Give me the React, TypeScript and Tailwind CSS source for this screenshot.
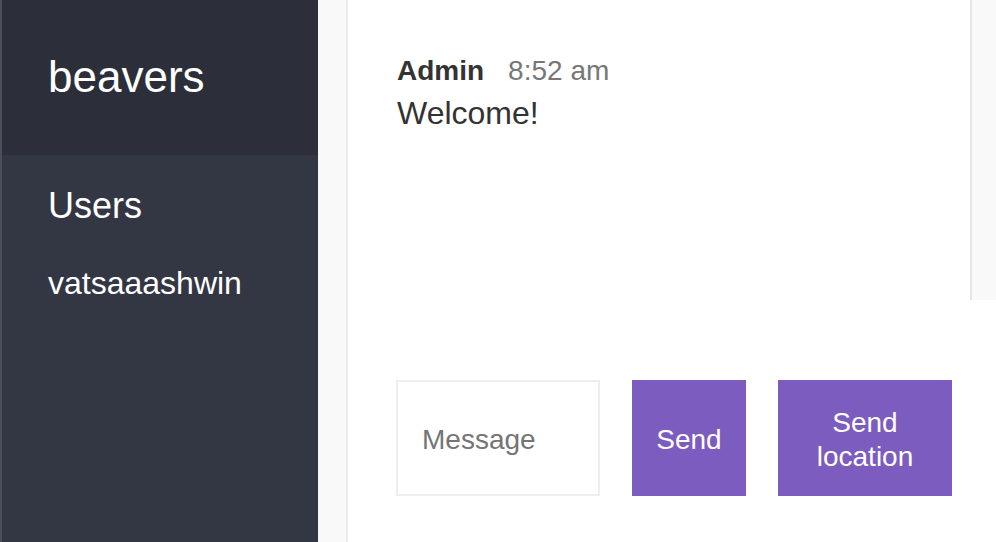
const users = ['vatsaaashwin'];

const messages = [{ name: 'Admin', time: '8:52 am', text: 'Welcome!' }];

const App = () => {
  return (
    <div className="flex h-screen w-full overflow-hidden bg-white font-['Liberation_Sans',Arial,sans-serif]">
      <aside className="flex w-[318px] shrink-0 flex-col border-l-2 border-[#4b4e5b] bg-[#333744] text-white">
        <h2 className="h-[155px] shrink-0 bg-[#2c2f3a] pl-[46px] pt-[52px] text-[44px] leading-[50px]">beavers</h2>
        <h3 className="mt-[30px] pl-[46px] text-[36px] leading-[41px]">Users</h3>
        <ul className="mt-[39px] pl-[46px] text-[32px] leading-[37px]">
          {users.map((u) => (
            <li key={u}>{u}</li>
          ))}
        </ul>
      </aside>
      <div className="w-[30px] shrink-0 border-r-2 border-[#ebebeb] bg-[#f9f9f9]" />
      <main className="flex min-w-0 flex-1 flex-col">
        <div className="flex h-[300px] shrink-0">
          <div className="flex-1 border-r-2 border-[#e6e6e6] pl-[49px] pt-[55px]">
            {messages.map((m) => (
              <div key={m.time} className="text-[#333]">
                <p className="text-[28px] leading-[32px]">
                  <span className="font-bold">{m.name}</span>
                  <span className="ml-[24px] text-[#777]">{m.time}</span>
                </p>
                <p className="mt-[8px] text-[32px] leading-[37px]">{m.text}</p>
              </div>
            ))}
          </div>
          <div className="w-[24px] shrink-0 bg-[#f9f9f9]" />
        </div>
        <div className="flex items-start gap-[32px] pl-[48px] pt-[80px]">
          <input
            placeholder="Message"
            className="h-[116px] w-[204px] border-2 border-[#eeeeee] px-[24px] pt-[4px] text-[28px] text-[#333] outline-none placeholder:text-[#757575]"
          />
          <button className="h-[116px] w-[114px] bg-[#7c5cbf] pt-[4px] text-[28px] text-white">Send</button>
          <button className="h-[116px] w-[174px] bg-[#7c5cbf] px-[20px] pt-[4px] text-[28px] leading-[34px] text-white">
            Send location
          </button>
        </div>
      </main>
    </div>
  );
};

export default App;
